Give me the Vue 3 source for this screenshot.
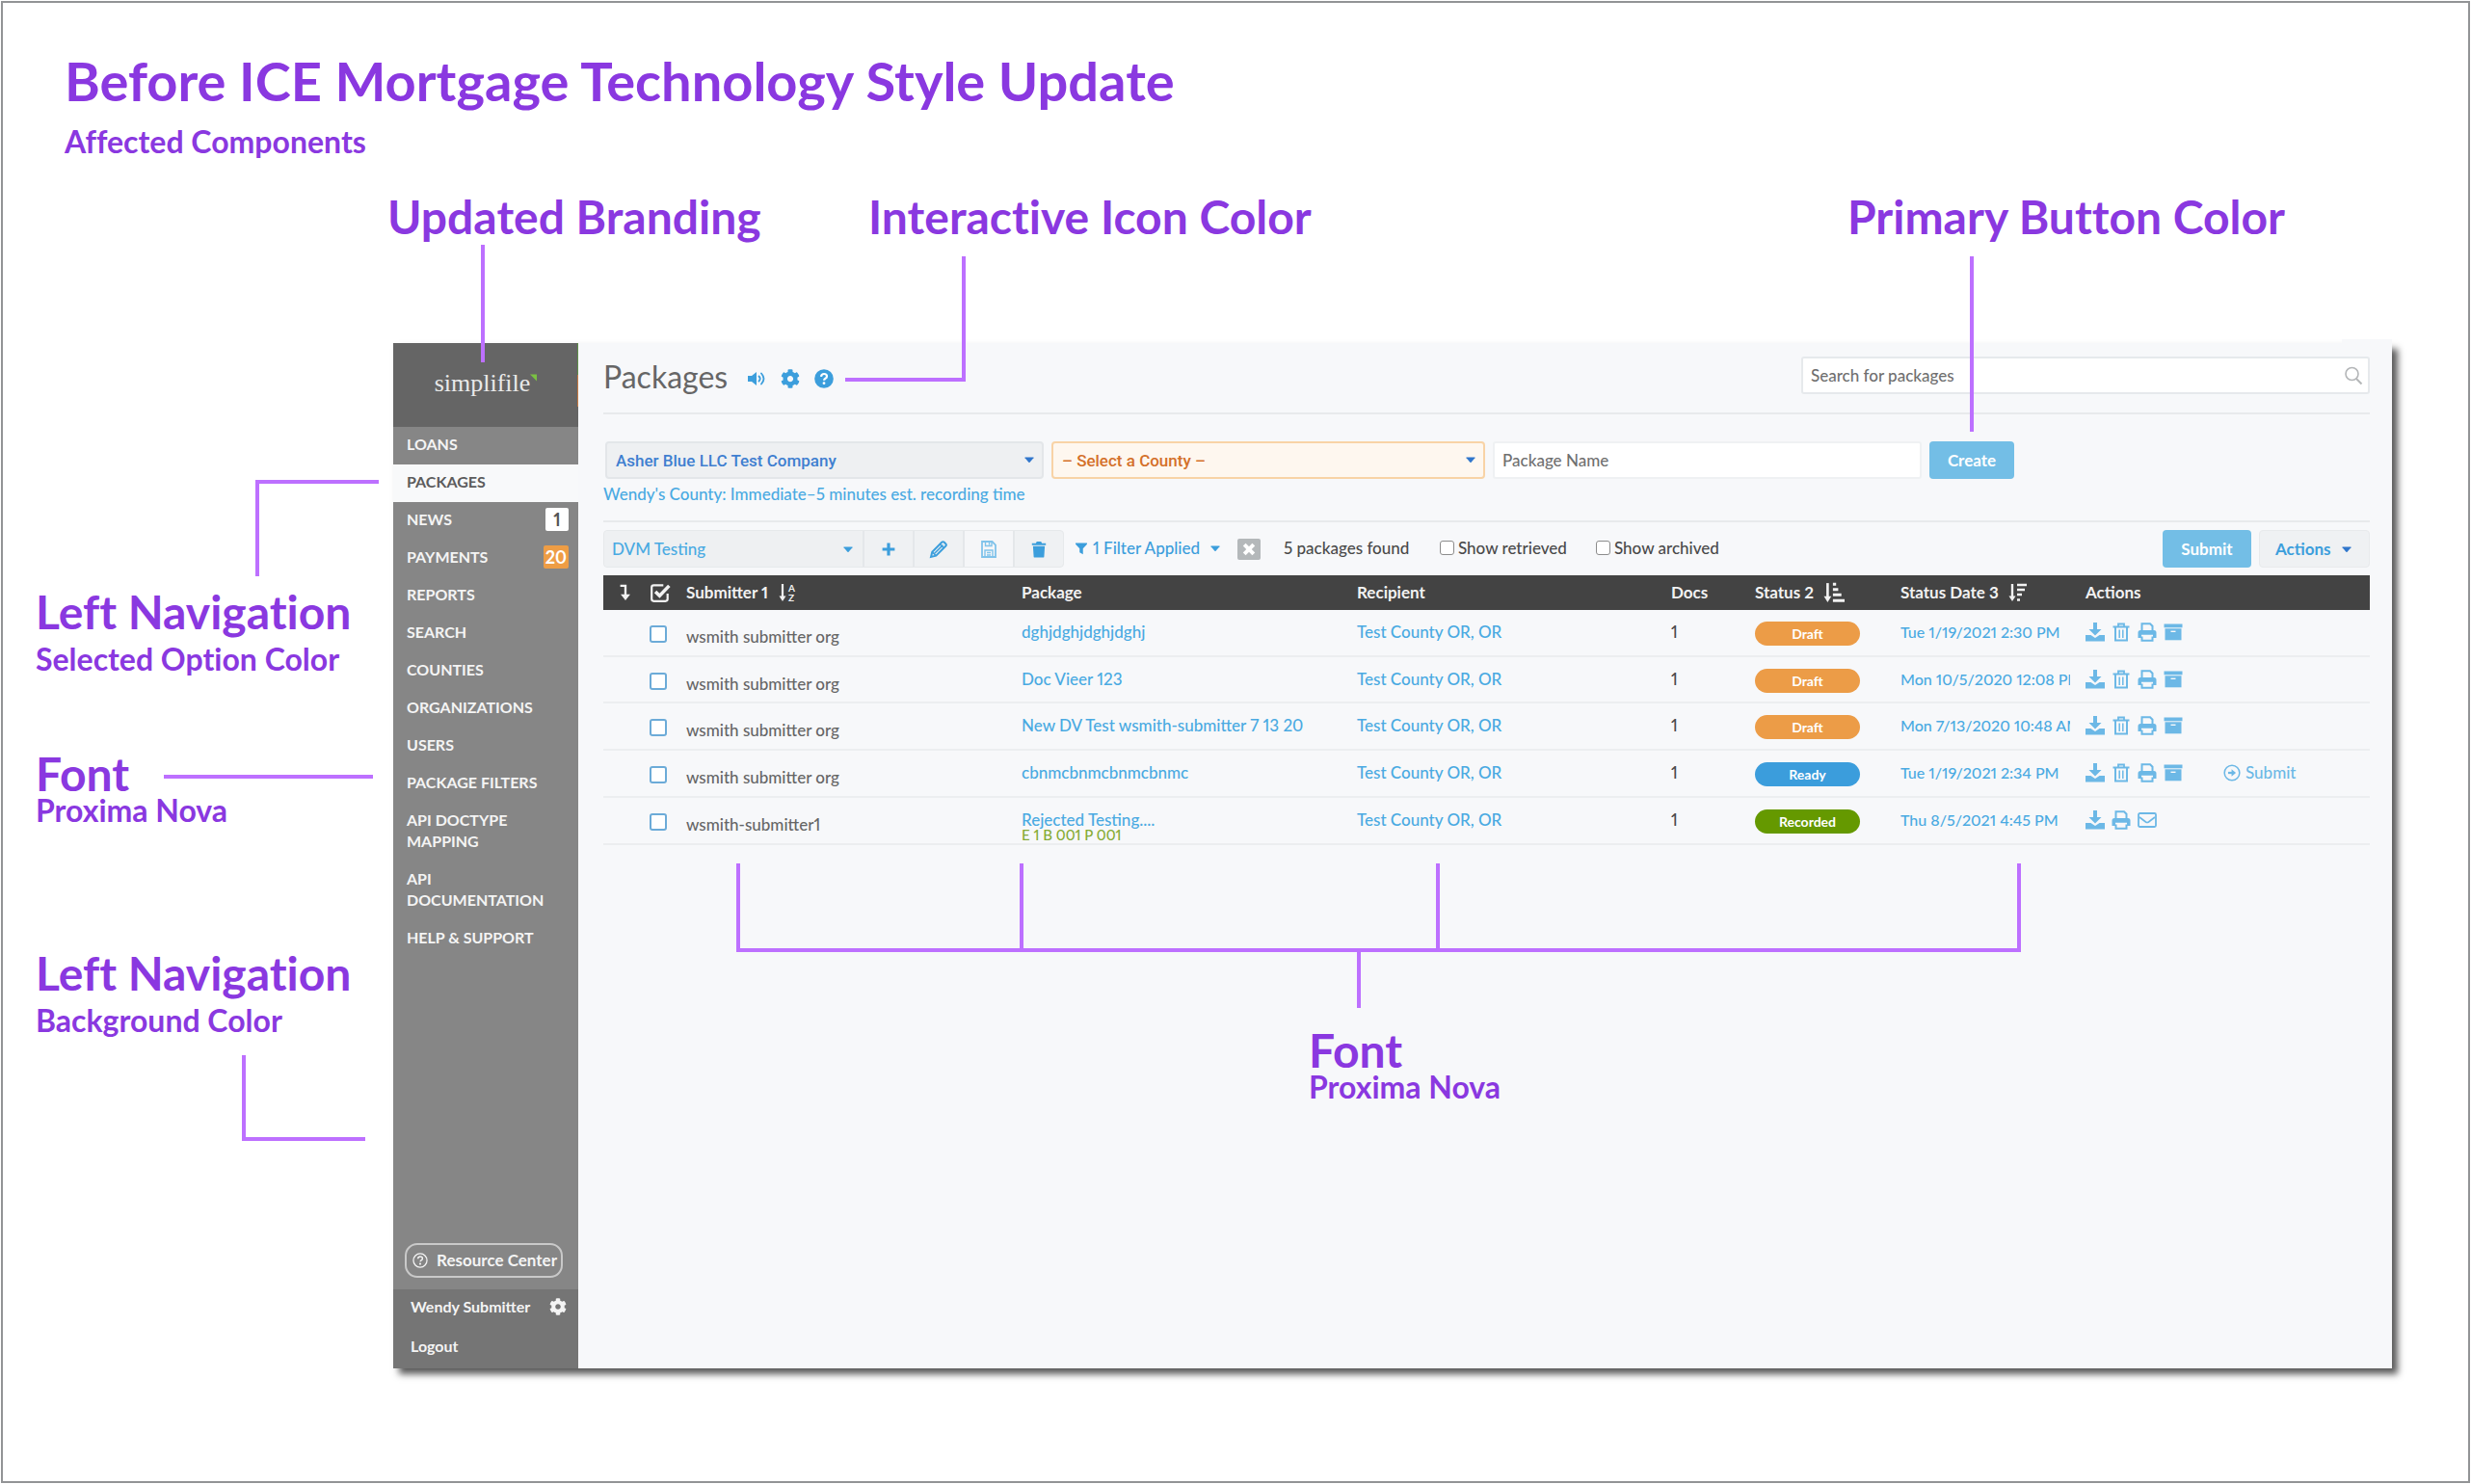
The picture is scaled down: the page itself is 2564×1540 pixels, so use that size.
<script setup>
import { ref, h } from 'vue'

const glyphs = {
  volume: '<path d="M1 7h4l5-4v14l-5-4H1z" fill="currentColor"/><path d="M12.500 7.500q2.500 2.500 0 5M15 4.500q5 5.500 0 11" fill="none" stroke="currentColor" stroke-width="1.800" stroke-linecap="round"/>',
  cog: '<path transform="scale(.0390625)" fill="currentColor" d="M487.4 315.7l-42.6-24.6c4.3-23.2 4.3-47 0-70.2l42.6-24.6c4.9-2.8 7.1-8.6 5.5-14-11.1-35.6-30-67.8-54.7-94.6-3.8-4.1-10-5.1-14.8-2.3L380.8 110c-17.900-15.400-38.500-27.300-60.800-35.100V25.800c0-5.600-3.900-10.500-9.400-11.700-36.700-8.200-74.300-7.800-109.200 0-5.500 1.200-9.400 6.100-9.400 11.700V75c-22.200 7.900-42.800 19.800-60.800 35.100L88.700 85.500c-4.900-2.800-11-1.900-14.800 2.300-24.700 26.700-43.600 58.900-54.700 94.600-1.700 5.400.6 11.200 5.500 14L67.300 221c-4.300 23.200-4.300 47 0 70.200l-42.600 24.600c-4.900 2.800-7.100 8.600-5.500 14 11.100 35.600 30 67.800 54.700 94.600 3.800 4.100 10 5.100 14.800 2.300l42.600-24.600c17.900 15.400 38.500 27.300 60.800 35.100v49.200c0 5.600 3.900 10.500 9.400 11.700 36.700 8.200 74.300 7.800 109.200 0 5.500-1.200 9.400-6.100 9.400-11.700v-49.200c22.200-7.900 42.800-19.800 60.800-35.100l42.600 24.600c4.900 2.800 11 1.900 14.800-2.300 24.700-26.700 43.600-58.900 54.700-94.600 1.500-5.500-.7-11.300-5.600-14.100zM256 336c-44.100 0-80-35.900-80-80s35.900-80 80-80 80 35.900 80 80-35.900 80-80 80z"/>',
  help: '<circle cx="10" cy="10" r="9.800" fill="currentColor"/><path d="M7 7.800q.4-2.800 3-2.800 3 0 3 2.400 0 1.500-1.600 2.300-1.300.7-1.300 2" fill="none" stroke="#fff" stroke-width="2.200"/><circle cx="10" cy="14.700" r="1.400" fill="#fff"/>',
  helpOutline: '<circle cx="10" cy="10" r="8.800" fill="none" stroke="currentColor" stroke-width="1.600"/><path d="M7 7.800q.4-2.800 3-2.800 3 0 3 2.400 0 1.500-1.600 2.300-1.300.7-1.300 2" fill="none" stroke="currentColor" stroke-width="1.800"/><circle cx="10" cy="14.500" r="1.300" fill="currentColor"/>',
  search: '<circle cx="8.500" cy="8" r="6.500" fill="none" stroke="currentColor" stroke-width="1.600"/><path d="M13 13l5.500 5.500" stroke="currentColor" stroke-width="2"/>',
  caret: '<path d="M4 6.500h12q1 0 .4 1l-5.600 6.500q-.8.9-1.600 0L3.600 7.500q-.6-1 .4-1z" fill="currentColor"/>',
  plus: '<path d="M10 2v16M2 10h16" stroke="currentColor" stroke-width="4"/>',
  pencil: '<path d="M2 18l1.300-5.300L13.200 2.800q1.300-1.300 2.600 0l1.400 1.400q1.300 1.300 0 2.600L7.300 16.700z" fill="none" stroke="currentColor" stroke-width="2"/><path d="M5.500 14.500L14.500 5.500M11.300 4.700l4 4M3.500 13l3.500 3.500" stroke="currentColor" stroke-width="1.600"/>',
  save: '<path d="M3 2h10.500L17 5.500V18H3z" fill="none" stroke="currentColor" stroke-width="1.800"/><path d="M6.500 2v4.500h6.500V2M6 18v-7h8v7M8 13.500h4M8 16h4M10.500 3v2.500" fill="none" stroke="currentColor" stroke-width="1.400"/>',
  trash: '<path d="M2 3h4.500l1-2h5l1 2H18v2.200H2zM3.200 6.300h13.600L16 18.500q-.1 1-1.200 1H5.200q-1.100 0-1.200-1z" fill="currentColor"/>',
  filter: '<path d="M1.500 2h17v2L12.500 10.500V19L7.500 16v-5.500L1.500 4z" fill="currentColor"/>',
  close: '<path d="M4 4l12 12M16 4L4 16" stroke="currentColor" stroke-width="5"/>',
  expand: '<path d="M4 2h6v12" fill="none" stroke="currentColor" stroke-width="2.600"/><path d="M4.500 12h11L10 19z" fill="currentColor"/>',
  checked: '<path d="M17 11v5q0 2-2 2H4q-2 0-2-2V5q0-2 2-2h9" fill="none" stroke="currentColor" stroke-width="2"/><path d="M5.500 9l4 4 9-9.500" fill="none" stroke="currentColor" stroke-width="3.200"/>',
  sortAlpha: '<path d="M5 1v14" stroke="currentColor" stroke-width="2.200"/><path d="M1.500 13.500h7L5 19z" fill="currentColor"/><text x="11" y="8.500" font-size="10" font-weight="700" font-family="Lato, sans-serif" fill="currentColor">A</text><text x="11" y="19" font-size="10" font-weight="700" font-family="Lato, sans-serif" fill="currentColor">Z</text>',
  sortUp: '<path d="M4 1v14" stroke="currentColor" stroke-width="2.400"/><path d="M.5 13.500h7L4 19z" fill="currentColor"/><path d="M9 2h3M9 7h5M9 12h8M9 17.500h11" stroke="currentColor" stroke-width="2.600"/>',
  sortDown: '<path d="M4 1v14" stroke="currentColor" stroke-width="2.400"/><path d="M.5 13.500h7L4 19z" fill="currentColor"/><path d="M9 2h10M9 7h8M9 12h5M9 17.500h3" stroke="currentColor" stroke-width="2.400"/>',
  download: '<path d="M8 0h4v7h4.500L10 13.500 3.500 7H8z" fill="currentColor"/><path d="M0 13h5.500l4.500 3 4.500-3H20v6.500H0z" fill="currentColor"/>',
  bin: '<path d="M4 5v13.500h12V5" fill="none" stroke="currentColor" stroke-width="2"/><path d="M1.500 4.500h17M7 4V1.500h6V4" fill="none" stroke="currentColor" stroke-width="1.800"/><path d="M8.200 7.500v8.500M11.800 7.500v8.500" stroke="currentColor" stroke-width="1.500"/>',
  print: '<path d="M4.500 8.500V1.200h8.500l2.500 2.500v4.800M4.500 14.500v4.300h11v-4.300" fill="none" stroke="currentColor" stroke-width="2"/><path d="M3 8h14q2.500 0 2.500 2.500V16H16v-3.200H4V16H.5v-5.500Q.5 8 3 8z" fill="currentColor"/>',
  archive: '<path d="M.5 1.500h19v3.800H.5z" fill="currentColor"/><path d="M1.500 6.300h17v12h-17z" fill="currentColor"/><path d="M7.500 9.300h5" stroke="#f7f8fa" stroke-width="1.400"/>',
  mail: '<rect x="1" y="3" width="18" height="14" rx="1.500" fill="none" stroke="currentColor" stroke-width="1.800"/><path d="M2 7l6.500 5q1.500 1 3 0L18 7" fill="none" stroke="currentColor" stroke-width="1.600"/>',
  go: '<circle cx="10" cy="10" r="8.700" fill="none" stroke="currentColor" stroke-width="1.700"/><path d="M5.500 10h5" stroke="currentColor" stroke-width="2.500"/><path d="M9.500 5.800l5 4.200-5 4.200z" fill="currentColor"/>',
}

const Icon = (props) =>
  h('svg', { viewBox: '0 0 20 20', 'aria-hidden': 'true', innerHTML: glyphs[props.name] })
Icon.props = ['name']

const nav = [
  { label: 'LOANS' },
  { label: 'PACKAGES', active: true },
  { label: 'NEWS', count: 1 },
  { label: 'PAYMENTS', count: 20, alert: true },
  { label: 'REPORTS' },
  { label: 'SEARCH' },
  { label: 'COUNTIES' },
  { label: 'ORGANIZATIONS' },
  { label: 'USERS' },
  { label: 'PACKAGE FILTERS' },
  { label: 'API DOCTYPE MAPPING' },
  { label: 'API DOCUMENTATION' },
  { label: 'HELP & SUPPORT' },
]

const full = ['download', 'bin', 'print', 'archive']
const rows = ref([
  { org: 'wsmith submitter org', name: 'dghjdghjdghjdghj', status: 'Draft', date: 'Tue 1/19/2021 2:30 PM', icons: full },
  { org: 'wsmith submitter org', name: 'Doc Vieer 123', status: 'Draft', date: 'Mon 10/5/2020 12:08 PM', icons: full },
  { org: 'wsmith submitter org', name: 'New DV Test wsmith-submitter 7 13 20', status: 'Draft', date: 'Mon 7/13/2020 10:48 AM', icons: full },
  { org: 'wsmith submitter org', name: 'cbnmcbnmcbnmcbnmc', status: 'Ready', date: 'Tue 1/19/2021 2:34 PM', icons: full, submit: true },
  { org: 'wsmith-submitter1', name: 'Rejected Testing....', note: 'E 1 B 001 P 001', status: 'Recorded', date: 'Thu 8/5/2021 4:45 PM', icons: ['download', 'print', 'mail'] },
])
</script>

<template>
  <div class="board">
    <header class="intro">
      <h1>Before ICE Mortgage Technology Style Update</h1>
      <p class="sub">Affected Components</p>
    </header>

    <div class="top-callouts">
      <h2>Updated Branding</h2>
      <h2>Interactive Icon Color</h2>
      <h2>Primary Button Color</h2>
    </div>

    <div class="stage">
      <aside class="side-callouts">
        <div class="callout spaced">
          <h2>Left Navigation</h2>
          <p class="sub">Selected Option Color</p>
        </div>
        <div class="callout">
          <h2>Font</h2>
          <p class="sub">Proxima Nova</p>
        </div>
        <div class="callout spaced">
          <h2>Left Navigation</h2>
          <p class="sub">Background Color</p>
        </div>
      </aside>

      <div class="app">
        <div class="corner"></div>
        <nav class="sidebar">
          <div class="brand">simplifile<svg viewBox="0 0 8 8" aria-hidden="true"><path d="M0 0h8v8z" fill="#7ac142" /></svg></div>
          <a v-for="item in nav" :key="item.label" href="#" class="nav-item" :class="{ active: item.active }">
            <span>{{ item.label }}</span>
            <span v-if="item.count" class="count" :class="{ alert: item.alert }">{{ item.count }}</span>
          </a>
          <button class="resource" type="button"><Icon name="helpOutline" class="i16" />Resource Center</button>
          <div class="account">
            <a href="#">Wendy Submitter<Icon name="cog" class="i18" /></a>
            <a href="#">Logout</a>
          </div>
        </nav>

        <main class="main">
          <div class="title-bar">
            <h3>Packages</h3>
            <div class="title-icons">
              <Icon name="volume" class="i20" />
              <Icon name="cog" class="i20" />
              <Icon name="help" class="i20" />
            </div>
            <div class="search">
              <input type="text" placeholder="Search for packages" aria-label="Search for packages" />
              <Icon name="search" class="i20" />
            </div>
          </div>

          <div class="create-bar">
            <div class="picker company">
              <select aria-label="Company"><option>Asher Blue LLC Test Company</option></select>
              <Icon name="caret" class="i14" />
            </div>
            <div class="picker county">
              <select aria-label="County"><option>– Select a County –</option></select>
              <Icon name="caret" class="i14" />
            </div>
            <input class="name" type="text" placeholder="Package Name" aria-label="Package Name" />
            <button class="primary create" type="button">Create</button>
          </div>
          <a href="#" class="hint">Wendy's County: Immediate–5 minutes est. recording time</a>

          <div class="tools">
            <div class="group">
              <div class="picker view">
                <select aria-label="View"><option>DVM Testing</option></select>
                <Icon name="caret" class="i14" />
              </div>
              <button type="button" aria-label="Add"><Icon name="plus" class="i16" /></button>
              <button type="button" aria-label="Edit"><Icon name="pencil" class="i20" /></button>
              <button type="button" aria-label="Save" disabled><Icon name="save" class="i20" /></button>
              <button type="button" aria-label="Delete"><Icon name="trash" class="i18" /></button>
            </div>
            <button class="filter" type="button"><Icon name="filter" class="i14" />1 Filter Applied<Icon name="caret" class="i14" /></button>
            <button class="clear" type="button" aria-label="Clear filter"><Icon name="close" class="i16" /></button>
            <span class="found">5 packages found</span>
            <label><input type="checkbox" />Show retrieved</label>
            <label><input type="checkbox" />Show archived</label>
            <button class="primary submit" type="button">Submit</button>
            <button class="menu" type="button">Actions<Icon name="caret" class="i14" /></button>
          </div>

          <table>
            <colgroup>
              <col class="c-expand" /><col class="c-check" /><col class="c-wide" /><col class="c-wide" /><col class="c-recipient" />
              <col class="c-docs" /><col class="c-status" /><col class="c-date" /><col />
            </colgroup>
            <thead>
              <tr>
                <th class="expand"><Icon name="expand" class="i18" /></th>
                <th><Icon name="checked" class="i22" /></th>
                <th><span>Submitter 1 <Icon name="sortAlpha" class="i20" /></span></th>
                <th>Package</th>
                <th>Recipient</th>
                <th>Docs</th>
                <th><span>Status 2 <Icon name="sortUp" class="i22" /></span></th>
                <th><span>Status Date 3 <Icon name="sortDown" class="i20" /></span></th>
                <th>Actions</th>
              </tr>
            </thead>
            <tbody>
              <tr v-for="(row, i) in rows" :key="i">
                <td></td>
                <td class="pick"><input type="checkbox" :aria-label="'Select ' + row.name" /></td>
                <td class="org">{{ row.org }}</td>
                <td><a href="#">{{ row.name }}</a><div v-if="row.note" class="note">{{ row.note }}</div></td>
                <td><a href="#">Test County OR, OR</a></td>
                <td>1</td>
                <td class="state"><span class="pill" :class="row.status.toLowerCase()">{{ row.status }}</span></td>
                <td><a href="#" class="date">{{ row.date }}</a></td>
                <td class="acts">
                  <div>
                    <a v-for="icon in row.icons" :key="icon" href="#" :aria-label="icon"><Icon :name="icon" class="i20" /></a>
                    <a v-if="row.submit" href="#" class="send"><Icon name="go" class="i18" />Submit</a>
                  </div>
                </td>
              </tr>
            </tbody>
          </table>
        </main>
      </div>
    </div>

    <div class="callout font-callout">
      <h2>Font</h2>
      <p class="sub">Proxima Nova</p>
    </div>

    <svg class="connectors" width="2560" height="1200" viewBox="0 0 2560 1200" aria-hidden="true">
      <path d="M501 254V376" />
      <path d="M1000 266V394H877" />
      <path d="M2046 266V448" />
      <path d="M267 598V500H393" />
      <path d="M170 806H387" />
      <path d="M253 1095V1182H379" />
      <path d="M766 896V986H2095V896M1060 896V986M1492 896V986M1410 986V1046" />
    </svg>
  </div>
</template>

<style>
body {
  background: #fff;
}
</style>

<style scoped>
* {
  box-sizing: border-box;
}
h1,
h2,
h3,
p {
  margin: 0;
}
a {
  color: inherit;
  text-decoration: none;
}
button,
input,
select {
  font: inherit;
  color: inherit;
}
.board {
  border: 2px solid #929496;
  outline: 1px solid #fff;
  margin: 1px;
  min-height: calc(100vh - 2px);
  padding: 49px 0 0;
  font-family: Lato, "Open Sans", sans-serif;
  font-variant-numeric: proportional-nums;
  color: #8a38e0;
}
.intro {
  padding-left: 64px;
}
h1,
h2,
.sub {
  font-weight: 700;
  font-variant-ligatures: none;
}
h1 {
  font-size: 56px;
  line-height: 64px;
}
h2 {
  font-size: 48px;
  line-height: 44px;
}
.sub {
  font-size: 32px;
  line-height: 32px;
}
.intro .sub {
  margin-top: 15px;
}
.top-callouts {
  display: grid;
  grid-template-columns: 499px 1016px 1fr;
  padding-left: 399px;
  margin-top: 40px;
}
.stage {
  display: grid;
  grid-template-columns: 405px minmax(0, 1fr);
  padding: 109px 79px 0 0;
}
.side-callouts {
  padding: 257px 0 0 34px;
}
.callout + .callout {
  margin-top: 81px;
}
.callout + .spaced {
  margin-top: 131px;
}
.spaced .sub {
  margin-top: 11px;
}
.font-callout {
  position: absolute;
  left: 1358px;
  top: 1068px;
}
.connectors {
  position: absolute;
  left: 0;
  top: 0;
  fill: none;
  stroke: #bd70ff;
  stroke-width: 4px;
  pointer-events: none;
}

.app {
  position: relative;
  display: grid;
  grid-template-columns: 192px minmax(0, 1fr);
  min-height: 1064px;
  background: #f7f8fa;
  box-shadow: 6px 6px 7px rgba(0, 0, 0, 0.65);
  font-size: 17px;
  line-height: 20px;
  font-weight: 500;
  color: #4a4a4a;
}
.corner {
  position: absolute;
  right: 0;
  top: -4px;
  width: 52px;
  height: 4px;
  background: #f7f8fa;
}
.sidebar {
  display: flex;
  flex-direction: column;
  background: #868686;
  color: #f4f4f4;
}
.brand {
  position: relative;
  display: flex;
  justify-content: center;
  height: 87px;
  padding-top: 27px;
  background: #656565;
  font-family: "Liberation Serif", serif;
  font-size: 26px;
  line-height: 30px;
  font-weight: 400;
  color: #e9e9e9;
}
.brand svg {
  width: 7px;
  height: 8px;
  margin-top: 5px;
}
.brand::after {
  content: "";
  position: absolute;
  right: 0;
  top: 0;
  width: 1px;
  height: 66px;
  background: linear-gradient(#5f8f4a 50%, #c47a44 50%);
}
.nav-item {
  display: flex;
  justify-content: space-between;
  align-items: center;
  padding: 7px 10px 10px 14px;
  line-height: 22px;
  font-weight: 700;
  font-size: 16px;
}
.nav-item.active {
  background: #f8f9fa;
  color: #5c5c5c;
}
.count {
  min-width: 24px;
  height: 24px;
  margin: -1px 0;
  padding: 0 2px;
  border-radius: 2px;
  background: #fff;
  color: #555;
  line-height: 24px;
  font-size: 18px;
  text-align: center;
}
.count.alert {
  background: #ee9d45;
  color: #fff;
}
.resource {
  display: flex;
  align-items: center;
  justify-content: space-between;
  height: 36px;
  margin: auto 16px 12px 12px;
  padding: 0 4px 0 6px;
  border: 2px solid #c9c9c9;
  border-radius: 13px;
  background: none;
  font-weight: 700;
}
.account {
  height: 82px;
  padding: 8px 12px 0 18px;
  background: #757575;
  font-weight: 700;
  font-size: 16px;
}
.account a {
  display: flex;
  justify-content: space-between;
  align-items: center;
  margin-bottom: 21px;
}

svg[class^="i"] {
  flex: none;
  display: block;
}
.i14 {
  width: 14px;
  height: 14px;
}
.i16 {
  width: 16px;
  height: 16px;
}
.i18 {
  width: 18px;
  height: 18px;
}
.i20 {
  width: 20px;
  height: 20px;
}
.i22 {
  width: 22px;
  height: 22px;
}

.main {
  padding: 14px 23px 0 26px;
}
.title-bar {
  display: flex;
  align-items: center;
  height: 60px;
  padding-bottom: 19px;
  border-bottom: 2px solid #e8eaec;
}
h3 {
  width: 149px;
  padding-top: 2px;
  font-size: 32px;
  line-height: 36px;
  font-weight: 400;
  color: #666;
}
.title-icons {
  display: flex;
  gap: 15px;
  margin-top: 7px;
  color: #3c9edc;
}
.search {
  position: relative;
  width: 590px;
  margin-left: auto;
}
.search input,
.name {
  width: 100%;
  height: 39px;
  padding: 0 8px;
  border: 2px solid #e6e9ec;
  border-radius: 3px;
  background: #fff;
}
.search svg {
  position: absolute;
  right: 7px;
  top: 10px;
  color: #b4b6b8;
}
input::placeholder {
  color: #707070;
  opacity: 1;
}
.create-bar {
  display: flex;
  gap: 8px;
  margin: 28px 0 0 2px;
}
.picker {
  position: relative;
  width: 455px;
  height: 39px;
}
.picker select {
  appearance: none;
  width: 100%;
  height: 100%;
  padding: 0 30px 0 9px;
  border: 2px solid #e3e6e9;
  border-radius: 4px;
  background: #eef0f2;
  font-family: Roboto, sans-serif;
  font-size: 17px;
  font-weight: 500;
  color: #3f7fd0;
}
.picker svg {
  position: absolute;
  right: 8px;
  top: 12px;
  color: #3076cc;
}
.picker.county {
  width: 450px;
}
.county select {
  border-color: #f8d3a6;
  background: #fef7ef;
  color: #d4702a;
}
.name {
  width: 445px;
  border-color: #eff1f3;
}
.primary {
  height: 39px;
  border: 0;
  border-radius: 4px;
  background: #73bee6;
  color: #fff;
  font-weight: 700;
}
.create {
  width: 88px;
}
.hint {
  display: block;
  height: 37px;
  margin-top: 6px;
  color: #4aaae2;
}
.tools {
  display: flex;
  align-items: center;
  height: 57px;
  padding: 8px 0 8px;
  border-top: 2px solid #e8eaec;
}
.group {
  display: flex;
  height: 39px;
  border: 1px solid #e6e9eb;
  border-radius: 4px;
  background: #eff1f3;
  color: #3c9edc;
}
.picker.view {
  width: 268px;
  height: 37px;
}
.view select {
  padding-left: 8px;
  border: 0;
  font-family: inherit;
  color: #4aaae2;
}
.view svg {
  color: #3c9edc;
}
.group button {
  display: flex;
  align-items: center;
  justify-content: center;
  width: 52px;
  border: 0;
  border-left: 2px solid #e4e7ea;
  background: none;
}
.group button:disabled {
  background: #f5f6f8;
  color: #80c3ea;
}
.filter {
  display: flex;
  align-items: center;
  gap: 5px;
  width: 153px;
  margin-left: 11px;
  padding: 0;
  border: 0;
  background: none;
  color: #3c9edc;
}
.filter svg:last-child {
  margin-left: auto;
}
.clear {
  display: flex;
  align-items: center;
  justify-content: center;
  width: 24px;
  height: 22px;
  margin-left: 16px;
  padding: 0;
  border: 0;
  border-radius: 2px;
  background: #b4b8ba;
  color: #fff;
}
.found {
  width: 138px;
  margin: 0 24px;
}
.tools label {
  display: flex;
  align-items: center;
  gap: 4px;
  width: 162px;
}
.tools input,
.pick input {
  appearance: none;
  width: 15px;
  height: 15px;
  margin: 0;
  border: 1px solid #8c8c8c;
  border-radius: 3px;
  background: #fff;
}
.filter,
.found,
.tools label {
  padding-bottom: 2px;
}
.submit {
  width: 92px;
  margin-left: auto;
}
.menu {
  display: flex;
  align-items: center;
  justify-content: space-between;
  width: 115px;
  height: 39px;
  margin-left: 8px;
  padding: 0 16px;
  border: 1px solid #e8eaec;
  border-radius: 4px;
  background: #eff1f3;
  color: #3c9edc;
  font-weight: 700;
}
.menu svg {
  color: #3076cc;
}

table {
  width: 100%;
  height: 280px;
  table-layout: fixed;
  border-collapse: collapse;
}
.c-expand {
  width: 48px;
}
.c-check {
  width: 38px;
}
.c-wide {
  width: 348px;
}
.c-recipient {
  width: 326px;
}
.c-docs {
  width: 87px;
}
.c-status {
  width: 151px;
}
.c-date {
  width: 192px;
}
th {
  height: 36px;
  padding: 0;
  background: #434343;
  color: #f2f2f2;
  font-weight: 700;
  text-align: left;
}
th.expand {
  padding-left: 14px;
}
th span {
  display: flex;
  align-items: center;
  gap: 10px;
}
td {
  padding: 13px 0 0;
  vertical-align: top;
  border-bottom: 2px solid #eceef0;
  white-space: nowrap;
}
td a {
  color: #4aaae2;
}
.pick {
  padding-top: 16px;
}
.pick input {
  display: block;
  width: 18px;
  height: 18px;
  border: 2px solid #6cabd8;
}
.org {
  padding-top: 18px;
  color: #666;
}
.note {
  height: 0;
  font-size: 15px;
  line-height: 11px;
  color: #86ab35;
}
.state {
  padding-top: 12px;
}
.pill {
  display: block;
  width: 109px;
  height: 25px;
  border-radius: 13px;
  color: #fff;
  font-size: 14px;
  line-height: 25px;
  font-weight: 700;
  text-align: center;
}
.draft {
  background: #ec9c47;
}
.ready {
  background: #3b9ddc;
}
.recorded {
  background: #659900;
}
.date {
  display: block;
  width: 176px;
  overflow: hidden;
  font-size: 16px;
}
.acts div {
  display: flex;
  gap: 7px;
}
.acts a {
  color: #6cb8e6;
}
.acts .send {
  display: flex;
  align-items: center;
  gap: 5px;
  margin-left: 35px;
}
</style>
